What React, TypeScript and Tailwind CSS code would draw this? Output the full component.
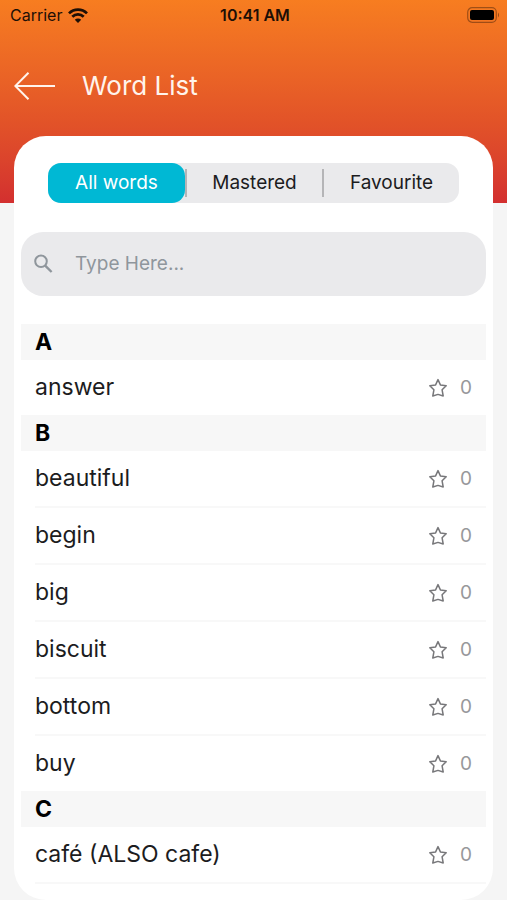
import { useState } from "react";
import clsx from "clsx";

const tabs = ["All words", "Mastered", "Favourite"];

const sections = [
  { letter: "A", words: ["answer"], more: false },
  { letter: "B", words: ["beautiful", "begin", "big", "biscuit", "bottom", "buy"], more: false },
  { letter: "C", words: ["café (ALSO cafe)"], more: true },
];

export default function App() {
  const [active, setActive] = useState("All words");
  const [query, setQuery] = useState("");

  return (
    <div className="flex min-h-screen flex-col bg-[#f5f5f5] font-['Inter',sans-serif] text-[#1c1c1e]">
      {/* Header */}
      <header className="h-[203px] bg-linear-to-b from-[#f77d20] via-[#e25328] via-60% to-[#d32f2f]">
        <StatusBar />
        <div className="flex items-center gap-[27px] px-3.5 pt-10">
          <button aria-label="Back" className="text-[#fff4ec]">
            <svg width="41" height="28" viewBox="0 0 41 28" fill="none" stroke="currentColor" strokeWidth="2">
              <path d="M14.5 0.7 1.3 14l13.2 13.3M1.3 14H41" />
            </svg>
          </button>
          <h1 className="text-[26px] leading-8 text-[#fff4ec]">Word List</h1>
        </div>
      </header>

      {/* Card */}
      <main className="relative mx-3.5 -mt-[67px] flex-1 rounded-[32px] bg-white px-[7px] pt-[27px] pb-4">
        <div className="mx-[27px] flex h-10 items-center rounded-[13px] bg-[#eaeaec]">
          {tabs.map((tab, i) => (
            <div key={tab} className="flex h-full flex-1 items-center">
              {i > 0 && <span className="h-7 w-0.5 shrink-0 bg-[#b5b5b7]" />}
              <button
                onClick={() => setActive(tab)}
                className={clsx(
                  "h-full flex-1 rounded-[13px] text-[19px] leading-6",
                  active === tab && "bg-[#00b8d4] text-white"
                )}
              >
                {tab}
              </button>
            </div>
          ))}
        </div>

        <label className="mt-[29px] flex h-16 items-center gap-[22px] rounded-[22px] bg-[#eaeaec] px-3 text-[#8f969c]">
          <SearchIcon />
          <input
            type="text"
            aria-label="Search words"
            placeholder="Type Here..."
            value={query}
            onChange={e => setQuery(e.target.value)}
            className="min-w-0 flex-1 bg-transparent text-[19px] leading-6 outline-none placeholder:text-[#8f969c]"
          />
        </label>

        <div className="mt-7">
          {sections.map(section => (
            <section key={section.letter}>
              <h2 className="h-9 bg-[#f7f7f7] px-3.5 text-[23px] leading-9 font-bold text-black">{section.letter}</h2>
              <ul>
                {section.words.map((word, i) => (
                  <WordRow key={word} word={word} divider={section.more || i < section.words.length - 1} />
                ))}
              </ul>
            </section>
          ))}
        </div>
      </main>
    </div>
  );
}

function WordRow({ word, divider }: { word: string; divider: boolean }) {
  return (
    <li className="pl-3.5">
      <div className={clsx("flex items-center pr-3.5", divider && "border-b-2 border-[#f8f8f8]")}>
        <span className="flex-1 text-[23px] leading-[55px]">{word}</span>
        <button aria-label={`Favourite ${word}`} className="text-[#77777a]">
          <StarIcon />
        </button>
        <span className="ml-3 text-[19px] leading-6 text-[#98989b]">0</span>
      </div>
    </li>
  );
}

function StatusBar() {
  return (
    <div className="grid h-[30px] grid-cols-3 items-center pr-[7px] pl-2.5 text-[#1d0f06]">
      <div className="flex items-center gap-1.5">
        <span className="text-[16px] leading-5">Carrier</span>
        <svg width="20" height="15" viewBox="0 0 20 15" fill="none" stroke="currentColor" strokeWidth="2.7">
          <path d="M1 5.4a12.7 12.7 0 0 1 18 0M4.3 8.8a8.1 8.1 0 0 1 11.4 0" />
          <path d="M10 15l-3.2-3.3a4.6 4.6 0 0 1 6.4 0z" fill="currentColor" stroke="none" />
        </svg>
      </div>
      <span className="text-center text-[16px] leading-5 font-semibold">10:41 AM</span>
      <svg className="justify-self-end" width="33" height="16" viewBox="0 0 33 16">
        <rect x="0.7" y="0.7" width="28.6" height="14.6" rx="4.5" fill="none" stroke="#000" strokeOpacity="0.35" strokeWidth="1.2" />
        <rect x="3" y="3" width="24" height="10" rx="2" fill="#000" />
        <path d="M31 5.5q2 2.5 0 5z" fill="#000" fillOpacity="0.4" />
      </svg>
    </div>
  );
}

function SearchIcon() {
  return (
    <svg width="20" height="20" viewBox="0 0 20 20" fill="none" stroke="currentColor" strokeWidth="2">
      <circle cx="8" cy="7.3" r="5.8" />
      <path d="M12.2 11.6 18.6 18" strokeWidth="2.4" />
    </svg>
  );
}

function StarIcon() {
  return (
    <svg width="20" height="20" viewBox="0 0 20 20" fill="none" stroke="currentColor" strokeWidth="1.5" strokeLinejoin="round">
      <path d="M10 1.6l2.4 5.3 5.8.8-4.1 4.1 1.1 6.2L10 16.4 4.8 18l1.1-6.2-4.1-4.1 5.8-.8z" />
    </svg>
  );
}
